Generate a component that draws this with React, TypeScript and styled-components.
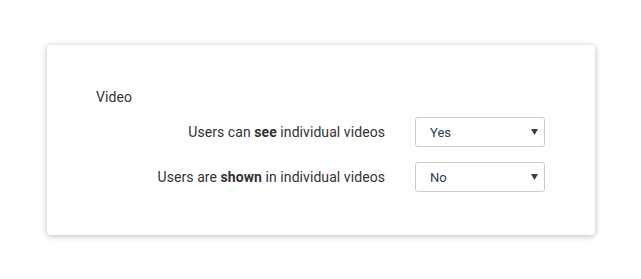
import * as React from "react";
import styled, { createGlobalStyle } from "styled-components";

const GlobalStyle = createGlobalStyle`
  body {
    margin: 0;
    background: #ffffff;
    font-family: Roboto, "Liberation Sans", Arial, sans-serif;
  }
`;

type Option = { label: React.ReactNode; value: string };

const rows: Option[] = [
  {
    label: (
      <>
        Users can <b>see</b> individual videos
      </>
    ),
    value: "Yes",
  },
  {
    label: (
      <>
        Users are <b>shown</b> in individual videos
      </>
    ),
    value: "No",
  },
];

const Caret = () => (
  <CaretIcon width="7" height="6" viewBox="0 0 7 6">
    <path d="M0 0 H7 L3.5 6 Z" fill="#2d3e4f" />
  </CaretIcon>
);

export default function App() {
  return (
    <Page>
      <GlobalStyle />
      <Card>
        <Heading>Video</Heading>
        <Rows>
          {rows.map((row, i) => (
            <Row key={i}>
              <Label>{row.label}</Label>
              <SelectBox>
                <Select defaultValue={row.value}>
                  <option>Yes</option>
                  <option>No</option>
                </Select>
                <Caret />
              </SelectBox>
            </Row>
          ))}
        </Rows>
      </Card>
    </Page>
  );
}

const Page = styled.div`
  padding: 45px 0 44px 47px;
`;

const Card = styled.div`
  width: 548px;
  height: 190px;
  box-sizing: border-box;
  padding: 43px 50px 0 49px;
  background: #fff;
  border-radius: 4px;
  box-shadow: 0 1px 6px rgba(0, 0, 0, 0.28);
`;

const Heading = styled.div`
  font-size: 14px;
  line-height: 18px;
  color: #333;
  letter-spacing: 0.07px;
`;

const Rows = styled.div`
  display: flex;
  flex-direction: column;
  gap: 15px;
  margin-top: 11px;
`;

const Row = styled.div`
  display: flex;
  align-items: center;
  justify-content: flex-end;
  gap: 30px;
  height: 30px;
`;

const Label = styled.div`
  font-size: 14px;
  color: #333;
  letter-spacing: 0.07px;
  b {
    font-weight: 700;
  }
`;

const SelectBox = styled.div`
  position: relative;
  width: 130px;
  height: 30px;
`;

const Select = styled.select`
  appearance: none;
  width: 100%;
  height: 100%;
  box-sizing: border-box;
  margin: 0;
  padding: 0 0 0 14px;
  border: 1px solid #ccc;
  border-radius: 3px;
  background: #fff;
  font-family: Roboto, "Liberation Sans", Arial, sans-serif;
  font-size: 13px;
  color: #2d3e4f;
  outline: none;
`;

const CaretIcon = styled.svg`
  position: absolute;
  right: 7px;
  top: 12px;
  pointer-events: none;
`;
